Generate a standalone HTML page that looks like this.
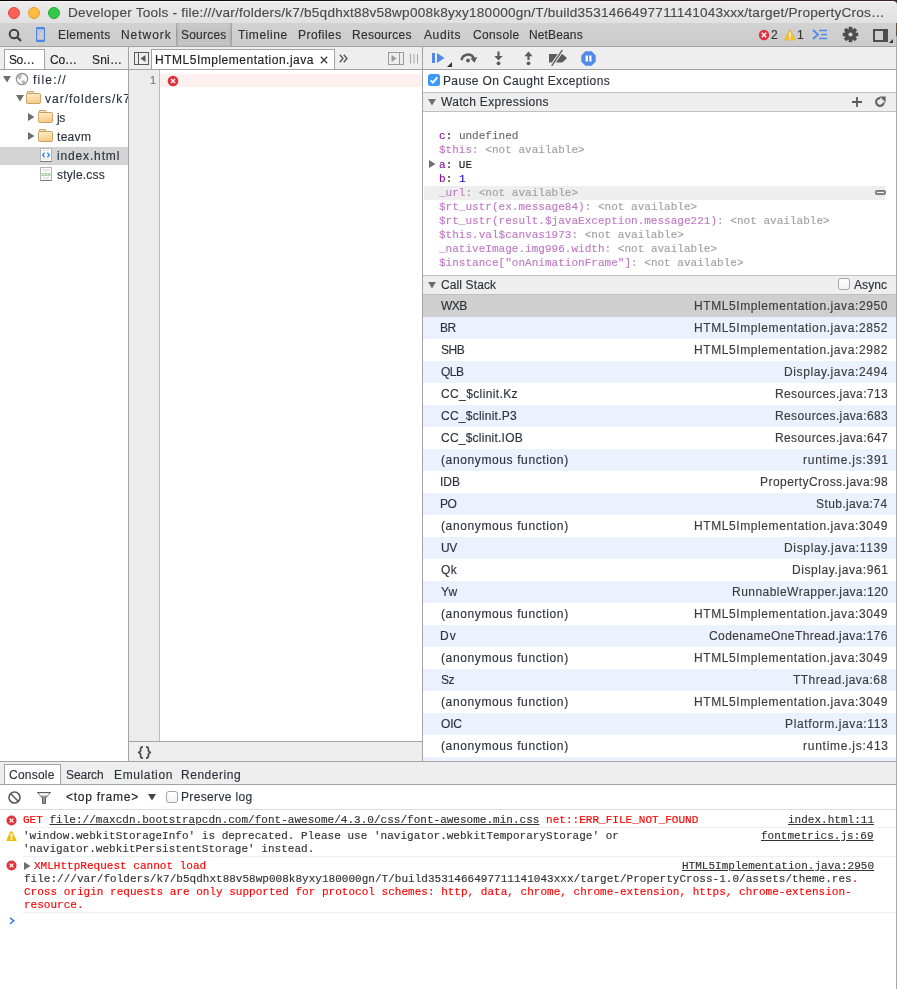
<!DOCTYPE html>
<html><head><meta charset="utf-8">
<style>
*{margin:0;padding:0;box-sizing:border-box}
html,body{width:897px;height:989px;overflow:hidden;background:#fff}
body{position:relative;font-family:"Liberation Sans",sans-serif;font-size:12px;color:#2c333d;}
.a{position:absolute}
.t{position:absolute;white-space:pre;line-height:14px;letter-spacing:0.45px;will-change:transform;-webkit-text-stroke:0.15px currentColor}
.m{font-family:"Liberation Mono",monospace;font-size:11px;letter-spacing:0.02px;line-height:13px}
.u{text-decoration:underline}
svg{position:absolute;overflow:visible}
</style></head><body>
<div class="a" style="left:0px;top:0px;width:897px;height:23px;background:linear-gradient(to right,#080404,#3a2430);"></div>
<div class="a" style="left:0px;top:1px;width:897px;height:22px;background:linear-gradient(#ececec,#e0e0e0);border-radius:0 4px 0 0"></div>
<div class="a" style="left:0px;top:1px;width:894px;height:1px;background:#f8f8f8;"></div>
<div class="t s" id="title" style="left:67.6px;top:5.5px;color:#4a4a4a;letter-spacing:0.217px;font-size:13.6px;">Developer Tools - file:///var/folders/k7/b5qdhxt88v58wp008k8yxy180000gn/T/build3531466497711141043xxx/target/PropertyCros…</div>
<div class="a" style="left:8px;top:7px;width:12px;height:12px;border-radius:50%;background:#fc5f57;border:0.5px solid #de4a44"></div>
<div class="a" style="left:28px;top:7px;width:12px;height:12px;border-radius:50%;background:#fdbc40;border:0.5px solid #de9f34"></div>
<div class="a" style="left:48px;top:7px;width:12px;height:12px;border-radius:50%;background:#34c84a;border:0.5px solid #27aa35"></div>
<div class="a" style="left:0px;top:23px;width:896px;height:23px;background:linear-gradient(#d2d2d2,#cbcbcb);"></div>
<div class="a" style="left:0px;top:46px;width:896px;height:1px;background:#a4a4a4;"></div>
<div class="a" style="left:176px;top:23px;width:56px;height:23px;background:linear-gradient(#cacaca,#c2c2c2 40%,#c4c4c4);box-shadow:inset 3px 0 3px -2px rgba(0,0,0,0.22),inset -3px 0 3px -2px rgba(0,0,0,0.22)"></div>
<div class="a" style="left:176px;top:25px;width:1px;height:20px;background:linear-gradient(rgba(150,150,150,0),#989898 50%,rgba(150,150,150,0));"></div>
<div class="a" style="left:231px;top:25px;width:1px;height:20px;background:linear-gradient(rgba(150,150,150,0),#989898 50%,rgba(150,150,150,0));"></div>
<div class="t s" id="tb_Elements" style="left:58.2px;top:28px;color:#303030;letter-spacing:0.307px;">Elements</div>
<div class="t s" id="tb_Network" style="left:121.0px;top:28px;color:#303030;letter-spacing:0.95px;">Network</div>
<div class="t s" id="tb_Sources" style="left:181.4px;top:28px;color:#303030;letter-spacing:0.217px;">Sources</div>
<div class="t s" id="tb_Timeline" style="left:238.4px;top:28px;color:#303030;letter-spacing:0.621px;">Timeline</div>
<div class="t s" id="tb_Profiles" style="left:298.2px;top:28px;color:#303030;letter-spacing:0.45px;">Profiles</div>
<div class="t s" id="tb_Resources" style="left:352.4px;top:28px;color:#303030;letter-spacing:0.275px;">Resources</div>
<div class="t s" id="tb_Audits" style="left:423.8px;top:28px;color:#303030;letter-spacing:0.61px;">Audits</div>
<div class="t s" id="tb_Console" style="left:472.8px;top:28px;color:#303030;letter-spacing:0.35px;">Console</div>
<div class="t s" id="tb_NetBeans" style="left:529.0px;top:28px;color:#303030;letter-spacing:0.136px;">NetBeans</div>
<svg style="left:7.5px;top:28px" width="16" height="16"><circle cx="6" cy="6" r="4.3" fill="none" stroke="#404040" stroke-width="2"/><line x1="9.2" y1="9.2" x2="13" y2="13" stroke="#404040" stroke-width="2.2"/></svg>
<svg style="left:36px;top:27px" width="9" height="15"><path d="M0 1.5Q0 0 1.5 0H7.5Q9 0 9 1.5V13.5Q9 15 7.5 15H1.5Q0 15 0 13.5Z M1.2 2.2V12.8H7.8V2.2Z" fill="#4a86e8" fill-rule="evenodd"/><path d="M2.3 8.5L5.5 3.5M2.2 5.2L3.5 3.3" stroke="#8fb2ee" stroke-width="0.9"/></svg>
<svg style="left:758px;top:29px" width="12" height="12"><circle cx="6" cy="6" r="5.2" fill="#e0323c"/><path d="M3.8 3.8L8.2 8.2M8.2 3.8L3.8 8.2" stroke="#fff" stroke-width="1.4"/></svg>
<div class="t s" style="left:771px;top:28px;color:#333;letter-spacing:0px;">2</div>
<svg style="left:784px;top:29px" width="12" height="12"><path d="M6 0.5L11.5 11H0.5Z" fill="#f4c430" stroke="#e0a800" stroke-width="0.5"/><rect x="5.3" y="3.5" width="1.4" height="4.5" fill="#fff"/><rect x="5.3" y="9" width="1.4" height="1.4" fill="#fff"/></svg>
<div class="t s" style="left:797px;top:28px;color:#333;letter-spacing:0px;">1</div>
<svg style="left:812px;top:29px" width="16" height="12"><path d="M1 1L6 5.5L1 10" fill="none" stroke="#4a8af4" stroke-width="1.8"/><path d="M7 1.5H15M9 5.5H15M7 9.5H15" stroke="#4a8af4" stroke-width="1.6"/></svg>
<svg style="left:842px;top:26px" width="17" height="17"><g transform="translate(8.5,8.5)" fill="#4d4d4d"><rect x="-1.8" y="-7.7" width="3.6" height="4" transform="rotate(0)"/><rect x="-1.8" y="-7.7" width="3.6" height="4" transform="rotate(45)"/><rect x="-1.8" y="-7.7" width="3.6" height="4" transform="rotate(90)"/><rect x="-1.8" y="-7.7" width="3.6" height="4" transform="rotate(135)"/><rect x="-1.8" y="-7.7" width="3.6" height="4" transform="rotate(180)"/><rect x="-1.8" y="-7.7" width="3.6" height="4" transform="rotate(225)"/><rect x="-1.8" y="-7.7" width="3.6" height="4" transform="rotate(270)"/><rect x="-1.8" y="-7.7" width="3.6" height="4" transform="rotate(315)"/><circle r="5.5"/></g><circle cx="8.5" cy="8.5" r="2.1" fill="#d4d4d4"/></svg>
<svg style="left:873px;top:29px" width="20" height="15"><rect x="1" y="1" width="13" height="11" fill="none" stroke="#4d4d4d" stroke-width="2"/><rect x="10" y="1" width="4" height="11" fill="#4d4d4d"/><path d="M20 10V14H16Z" fill="#333"/></svg>
<div class="a" style="left:0px;top:47px;width:128px;height:22px;background:#eeeeee;"></div>
<div class="a" style="left:0px;top:69px;width:128px;height:1px;background:#a3a3a3;"></div>
<div class="a" style="left:4px;top:49px;width:41px;height:20px;background:#fff;border:1px solid #a3a3a3;border-bottom:none;"></div>
<div class="t s" id="nav_so" style="left:9.2px;top:53px;color:#222;letter-spacing:-0.5px;">So…</div>
<div class="t s" id="nav_co" style="left:50.2px;top:53px;color:#222;letter-spacing:-0.15px;">Co…</div>
<div class="t s" id="nav_sni" style="left:91.8px;top:53px;color:#222;letter-spacing:0.183px;">Sni…</div>
<div class="a" style="left:128px;top:47px;width:1px;height:714px;background:#a3a3a3;"></div>
<div class="a" style="left:0px;top:147px;width:128px;height:18px;background:#d4d4d4;"></div>
<svg style="left:3px;top:76px" width="8" height="7"><path d="M0 0H8L4 6.5Z" fill="#6e6e6e"/></svg>
<svg style="left:15px;top:72px" width="14" height="14"><circle cx="7" cy="7" r="5.7" fill="#fbfbfb" stroke="#8c8c8c" stroke-width="1.15"/><path d="M2.8 4.2Q4.6 2.2 8 2.6L6.6 4.4Q5.6 5.2 6.2 7Q4.6 7.8 3.4 6.9Q2.6 5.6 2.8 4.2Z" fill="#b9b9b9"/><path d="M6.6 8.5Q8.8 8.1 10.4 9.2Q9.9 11.4 8 12.4Q6.7 11.2 6.6 8.5Z" fill="#b2b2b2"/></svg>
<div class="t s" id="tr_file" style="left:32.8px;top:73px;letter-spacing:1.2px;">file://</div>
<svg style="left:15.5px;top:95px" width="8" height="7"><path d="M0 0H8L4 6.5Z" fill="#6e6e6e"/></svg>
<svg style="left:26px;top:91px" width="15" height="13"><defs><linearGradient id="fg" x1="0" y1="0" x2="0.3" y2="1"><stop offset="0" stop-color="#fff0d2"/><stop offset="1" stop-color="#f8cb86"/></linearGradient></defs><path d="M1.5 0.5H7Q7.8 0.5 7.8 1.3V2.5H1Z" fill="#fde2b0" stroke="#c49a5a" stroke-width="0.9"/><rect x="0.5" y="2.5" width="14" height="10" rx="1.2" fill="url(#fg)" stroke="#c49a5a" stroke-width="0.9"/></svg>
<div class="a" style="left:0;top:88px;width:128px;height:18px;overflow:hidden">
<div class="t s" id="tr_var" style="left:44.5px;top:4px;letter-spacing:1.0px;">var/folders/k7</div>
</div>
<svg style="left:28px;top:113px" width="7" height="8"><path d="M0 0V8L6.5 4Z" fill="#6e6e6e"/></svg>
<svg style="left:38px;top:110px" width="15" height="13"><defs><linearGradient id="fg" x1="0" y1="0" x2="0.3" y2="1"><stop offset="0" stop-color="#fff0d2"/><stop offset="1" stop-color="#f8cb86"/></linearGradient></defs><path d="M1.5 0.5H7Q7.8 0.5 7.8 1.3V2.5H1Z" fill="#fde2b0" stroke="#c49a5a" stroke-width="0.9"/><rect x="0.5" y="2.5" width="14" height="10" rx="1.2" fill="url(#fg)" stroke="#c49a5a" stroke-width="0.9"/></svg>
<div class="t s" id="tr_js" style="left:57.2px;top:111px;letter-spacing:-0.5px;">js</div>
<svg style="left:28px;top:132px" width="7" height="8"><path d="M0 0V8L6.5 4Z" fill="#6e6e6e"/></svg>
<svg style="left:38px;top:129px" width="15" height="13"><defs><linearGradient id="fg" x1="0" y1="0" x2="0.3" y2="1"><stop offset="0" stop-color="#fff0d2"/><stop offset="1" stop-color="#f8cb86"/></linearGradient></defs><path d="M1.5 0.5H7Q7.8 0.5 7.8 1.3V2.5H1Z" fill="#fde2b0" stroke="#c49a5a" stroke-width="0.9"/><rect x="0.5" y="2.5" width="14" height="10" rx="1.2" fill="url(#fg)" stroke="#c49a5a" stroke-width="0.9"/></svg>
<div class="t s" id="tr_teavm" style="left:57.2px;top:130px;letter-spacing:0.3px;">teavm</div>
<svg style="left:40px;top:148px" width="12" height="14"><rect x="0.5" y="0.5" width="11" height="13" fill="#fdfdfd" stroke="#b4b4b4"/><path d="M0.5 13.5H11.5" stroke="#7a7a7a"/><path d="M2.5 2.5H9.5M2.5 11H9.5" stroke="#d0d0d0" stroke-width="0.8"/><path d="M4.6 4.6L2.7 7L4.6 9.4M7.4 4.6L9.3 7L7.4 9.4" stroke="#3f86ee" stroke-width="1.5" fill="none"/></svg>
<div class="t s" id="tr_index" style="left:57.2px;top:149px;letter-spacing:0.85px;">index.html</div>
<svg style="left:40px;top:167px" width="12" height="14"><rect x="0.5" y="0.5" width="11" height="13" fill="#fdfdfd" stroke="#b4b4b4"/><path d="M0.5 13.5H11.5" stroke="#7a7a7a"/><path d="M2.5 2.5H9.5M2.5 3.8H9.5M2.5 10.5H9.5M2.5 11.7H9.5" stroke="#d8d8d8" stroke-width="0.7"/><text x="6" y="8.8" font-size="5.8" font-family="Liberation Sans" font-weight="bold" text-anchor="middle" fill="#79b863" letter-spacing="-0.2">css</text></svg>
<div class="t s" id="tr_style" style="left:57.2px;top:168px;letter-spacing:0.225px;">style.css</div>
<div class="a" style="left:129px;top:47px;width:293px;height:22px;background:#eeeeee;"></div>
<div class="a" style="left:129px;top:69px;width:293px;height:1px;background:#a3a3a3;"></div>
<svg style="left:134px;top:52px" width="15" height="13"><rect x="0.5" y="0.5" width="14" height="12" fill="none" stroke="#5a5a5a"/><path d="M4.5 1V12" stroke="#5a5a5a"/><path d="M11.5 3V10L6.5 6.5Z" fill="#5a5a5a"/></svg>
<div class="a" style="left:151px;top:49px;width:184px;height:20px;background:#fff;border:1px solid #a3a3a3;border-bottom:none;"></div>
<div class="t s" id="ed_tab" style="left:155.0px;top:53px;color:#222;letter-spacing:0.511px;">HTML5Implementation.java</div>
<svg style="left:320px;top:56px" width="8" height="8"><path d="M0.8 0.8L7.2 7.2M7.2 0.8L0.8 7.2" stroke="#444" stroke-width="1.4"/></svg>
<svg style="left:339px;top:54px" width="9" height="9"><path d="M0.8 0.8L4 4.5L0.8 8.2M4.8 0.8L8 4.5L4.8 8.2" stroke="#555" stroke-width="1.3" fill="none"/></svg>
<svg style="left:388px;top:52px" width="16" height="13"><rect x="0.5" y="0.5" width="15" height="12" fill="none" stroke="#9a9a9a"/><path d="M11.5 1V12" stroke="#9a9a9a"/><path d="M3.5 3V10L8.5 6.5Z" fill="#9a9a9a"/></svg>
<svg style="left:409px;top:54px" width="10" height="10"><path d="M1.5 0V9.5M5 0V9.5M8.5 0V9.5" stroke="#9c9c9c" stroke-width="0.9"/></svg>
<div class="a" style="left:129px;top:70px;width:30px;height:671px;background:#ececec;"></div>
<div class="a" style="left:159px;top:70px;width:1px;height:671px;background:#bbbbbb;"></div>
<div class="a" style="left:160px;top:74px;width:262px;height:13px;background:#fff0f0;"></div>
<div class="t s" style="left:149.5px;top:73px;color:#787878;letter-spacing:0px;font-size:11px;">1</div>
<svg style="left:167px;top:75px" width="12" height="12"><circle cx="6" cy="6" r="5.3" fill="#e0323c"/><path d="M4 4L8 8M8 4L4 8" stroke="#fff" stroke-width="1.3"/></svg>
<div class="a" style="left:129px;top:741px;width:293px;height:1px;background:#a3a3a3;"></div>
<div class="a" style="left:129px;top:742px;width:293px;height:19px;background:#eeeeee;"></div>
<svg style="left:137px;top:746px" width="16" height="13"><path d="M6 0.9Q3.6 0.9 3.6 3V4.6Q3.6 6.2 1 6.5Q3.6 6.8 3.6 8.4V10Q3.6 12.1 6 12.1M9 0.9Q11.4 0.9 11.4 3V4.6Q11.4 6.2 14 6.5Q11.4 6.8 11.4 8.4V10Q11.4 12.1 9 12.1" fill="none" stroke="#4a4a4a" stroke-width="1.7"/></svg>
<div class="a" style="left:422px;top:47px;width:1px;height:714px;background:#a3a3a3;"></div>
<div class="a" style="left:423px;top:47px;width:473px;height:22px;background:#eeeeee;"></div>
<div class="a" style="left:423px;top:69px;width:473px;height:1px;background:#a3a3a3;"></div>
<svg style="left:431px;top:52px" width="22" height="16"><rect x="1" y="1" width="3" height="10" fill="#4f8ae8"/><path d="M6 1V11L13.5 6Z" fill="#4f8ae8"/><path d="M21 10V15H16Z" fill="#333"/></svg>
<svg style="left:459px;top:51px" width="20" height="14"><path d="M2.5 9.2A6.6 6.6 0 0 1 14.8 7" fill="none" stroke="#5c5c5c" stroke-width="2.4"/><path d="M11.3 7.6L18.2 6L15.6 11.8Z" fill="#5c5c5c"/><circle cx="9" cy="9.5" r="1.9" fill="#5c5c5c"/></svg>
<svg style="left:494px;top:51px" width="9" height="15"><path d="M4.5 0.5V6" stroke="#5c5c5c" stroke-width="2.2"/><path d="M0.3 5H8.7L4.5 9.5Z" fill="#5c5c5c"/><circle cx="4.5" cy="12.3" r="1.9" fill="#5c5c5c"/></svg>
<svg style="left:524px;top:51px" width="9" height="15"><path d="M4.5 4V9" stroke="#5c5c5c" stroke-width="2.2"/><path d="M0.3 5.3H8.7L4.5 0.6Z" fill="#5c5c5c"/><circle cx="4.5" cy="12.3" r="1.9" fill="#5c5c5c"/></svg>
<svg style="left:548px;top:49px" width="20" height="18"><path d="M1 5H13.5Q14.5 5 15.5 6L18.6 8.8Q19 9.2 18.6 9.6L15.5 12.4Q14.5 13.4 13.5 13.4H1Z" fill="#5c5c5c"/><path d="M14.5 1L3.5 17" stroke="#eeeeee" stroke-width="3.4"/><path d="M14.3 1.2L3.7 16.8" stroke="#5c5c5c" stroke-width="1.4"/></svg>
<svg style="left:580.5px;top:50.5px" width="15" height="15"><path d="M4.4 0.3H10.6L14.7 4.4V10.6L10.6 14.7H4.4L0.3 10.6V4.4Z" fill="#4f8ae8"/><rect x="4.6" y="4.5" width="2.3" height="6" fill="#fffdf5"/><rect x="8.2" y="4.5" width="2.3" height="6" fill="#fffdf5"/></svg>
<svg style="left:428px;top:74px" width="12" height="12"><rect x="0" y="0" width="12" height="12" rx="2.5" fill="#3b99fc"/><path d="M2.7 6.3L4.9 8.6L9.3 3.4" fill="none" stroke="#fff" stroke-width="1.9"/></svg>
<div class="t s" id="pause" style="left:442.8px;top:74px;letter-spacing:0.37px;">Pause On Caught Exceptions</div>
<div class="a" style="left:423px;top:92px;width:473px;height:1px;background:#c0c0c0;"></div>
<div class="a" style="left:423px;top:93px;width:473px;height:18px;background:#eeeeee;"></div>
<div class="a" style="left:423px;top:111px;width:473px;height:1px;background:#c0c0c0;"></div>
<svg style="left:428px;top:99px" width="8" height="7"><path d="M0 0H8L4 6.5Z" fill="#6e6e6e"/></svg>
<div class="t s" id="watch" style="left:441.0px;top:95px;letter-spacing:0.325px;">Watch Expressions</div>
<svg style="left:852px;top:97px" width="10" height="10"><path d="M5 0V10M0 5H10" stroke="#5a5a5a" stroke-width="1.8"/></svg>
<svg style="left:874px;top:96px" width="12" height="12"><path d="M9.9 6.2A3.9 3.9 0 1 1 6.4 2.1" fill="none" stroke="#646464" stroke-width="2.1"/><path d="M5.6 0.4H11.6V6.4Z" fill="#646464"/></svg>
<div class="a" style="left:424px;top:186px;width:461px;height:14px;background:#eeeeee;"></div>
<div class="a" style="left:875px;top:190px;width:11px;height:5px;border-radius:1.5px;background:#8a8a8a;border:1px solid #777"></div>
<div class="a" style="left:877px;top:192px;width:7px;height:1px;background:#eee"></div>
<svg style="left:429px;top:160px" width="7" height="8"><path d="M0 0V8L6.5 4Z" fill="#6e6e6e"/></svg>
<div class="t m" style="left:439px;top:130px;"><span style="color:#881391">c</span><span style="color:#222">: </span><span style="color:#6a6a6a">undefined</span></div>
<div class="t m" style="left:439px;top:144px;"><span style="color:#c07ac4">$this</span><span style="color:#a0a0a0">: &lt;not available&gt;</span></div>
<div class="t m" style="left:439px;top:159px;"><span style="color:#881391">a</span><span style="color:#222">: UE</span></div>
<div class="t m" style="left:439px;top:173px;"><span style="color:#881391">b</span><span style="color:#222">: </span><span style="color:#1c00cf">1</span></div>
<div class="t m" style="left:439px;top:187px;"><span style="color:#c07ac4">_url</span><span style="color:#a0a0a0">: &lt;not available&gt;</span></div>
<div class="t m" style="left:439px;top:201px;"><span style="color:#c07ac4">$rt_ustr(ex.message84)</span><span style="color:#a0a0a0">: &lt;not available&gt;</span></div>
<div class="t m" style="left:439px;top:215px;"><span style="color:#c07ac4">$rt_ustr(result.$javaException.message221)</span><span style="color:#a0a0a0">: &lt;not available&gt;</span></div>
<div class="t m" style="left:439px;top:229px;"><span style="color:#c07ac4">$this.val$canvas1973</span><span style="color:#a0a0a0">: &lt;not available&gt;</span></div>
<div class="t m" style="left:439px;top:243px;"><span style="color:#c07ac4">_nativeImage.img996.width</span><span style="color:#a0a0a0">: &lt;not available&gt;</span></div>
<div class="t m" style="left:439px;top:257px;"><span style="color:#c07ac4">$instance["onAnimationFrame"]</span><span style="color:#a0a0a0">: &lt;not available&gt;</span></div>
<div class="a" style="left:423px;top:275px;width:473px;height:1px;background:#c0c0c0;"></div>
<div class="a" style="left:423px;top:276px;width:473px;height:18px;background:#eeeeee;"></div>
<div class="a" style="left:423px;top:294px;width:473px;height:1px;background:#c0c0c0;"></div>
<svg style="left:428px;top:282px" width="8" height="7"><path d="M0 0H8L4 6.5Z" fill="#6e6e6e"/></svg>
<div class="t s" id="cs_hdr" style="left:441.2px;top:278px;letter-spacing:0.117px;">Call Stack</div>
<div class="a" style="left:838px;top:278px;width:12px;height:12px;border:1px solid #a5a5a5;border-radius:3px;background:linear-gradient(#fff,#f4f4f4)"></div>
<div class="t s" id="async" style="left:853.6px;top:278px;letter-spacing:0.1px;">Async</div>
<div class="a" style="left:423px;top:295px;width:473px;height:22px;background:#cfcfcf;"></div>
<div class="t s" id="csf0" style="left:441.2px;top:299px;letter-spacing:-0.5px;">WXB</div>
<div class="t s" id="csl0" style="right:8.86px;top:299px;text-align:right;color:#3c3c3c;letter-spacing:0.593px;">HTML5Implementation.java:2950</div>
<div class="a" style="left:423px;top:317px;width:473px;height:22px;background:#ebf2fe;"></div>
<div class="t s" id="csf1" style="left:440.2px;top:321px;letter-spacing:-0.5px;">BR</div>
<div class="t s" id="csl1" style="right:8.86px;top:321px;text-align:right;color:#3c3c3c;letter-spacing:0.593px;">HTML5Implementation.java:2852</div>
<div class="t s" id="csf2" style="left:441.2px;top:343px;letter-spacing:-0.5px;">SHB</div>
<div class="t s" id="csl2" style="right:8.86px;top:343px;text-align:right;color:#3c3c3c;letter-spacing:0.593px;">HTML5Implementation.java:2982</div>
<div class="a" style="left:423px;top:361px;width:473px;height:22px;background:#ebf2fe;"></div>
<div class="t s" id="csf3" style="left:441.2px;top:365px;letter-spacing:-0.5px;">QLB</div>
<div class="t s" id="csl3" style="right:8.85px;top:365px;text-align:right;color:#3c3c3c;letter-spacing:0.6px;">Display.java:2494</div>
<div class="t s" id="csf4" style="left:441.2px;top:387px;letter-spacing:0.383px;">CC_$clinit.Kz</div>
<div class="t s" id="csl4" style="right:9.06px;top:387px;text-align:right;color:#3c3c3c;letter-spacing:0.391px;">Resources.java:713</div>
<div class="a" style="left:423px;top:405px;width:473px;height:22px;background:#ebf2fe;"></div>
<div class="t s" id="csf5" style="left:441.2px;top:409px;letter-spacing:0.25px;">CC_$clinit.P3</div>
<div class="t s" id="csl5" style="right:9.06px;top:409px;text-align:right;color:#3c3c3c;letter-spacing:0.391px;">Resources.java:683</div>
<div class="t s" id="csf6" style="left:441.2px;top:431px;letter-spacing:0.235px;">CC_$clinit.IOB</div>
<div class="t s" id="csl6" style="right:9.06px;top:431px;text-align:right;color:#3c3c3c;letter-spacing:0.391px;">Resources.java:647</div>
<div class="a" style="left:423px;top:449px;width:473px;height:22px;background:#ebf2fe;"></div>
<div class="t s" id="csf7" style="left:441.2px;top:453px;letter-spacing:0.618px;">(anonymous function)</div>
<div class="t s" id="csl7" style="right:8.71px;top:453px;text-align:right;color:#3c3c3c;letter-spacing:0.742px;">runtime.js:391</div>
<div class="t s" id="csf8" style="left:440.2px;top:475px;letter-spacing:0.0px;">IDB</div>
<div class="t s" id="csl8" style="right:9.0px;top:475px;text-align:right;color:#3c3c3c;letter-spacing:0.45px;">PropertyCross.java:98</div>
<div class="a" style="left:423px;top:493px;width:473px;height:22px;background:#ebf2fe;"></div>
<div class="t s" id="csf9" style="left:440.2px;top:497px;letter-spacing:-0.5px;">PO</div>
<div class="t s" id="csl9" style="right:9.05px;top:497px;text-align:right;color:#3c3c3c;letter-spacing:0.395px;">Stub.java:74</div>
<div class="t s" id="csf10" style="left:441.2px;top:519px;letter-spacing:0.618px;">(anonymous function)</div>
<div class="t s" id="csl10" style="right:8.86px;top:519px;text-align:right;color:#3c3c3c;letter-spacing:0.593px;">HTML5Implementation.java:3049</div>
<div class="a" style="left:423px;top:537px;width:473px;height:22px;background:#ebf2fe;"></div>
<div class="t s" id="csf11" style="left:441.2px;top:541px;letter-spacing:-0.5px;">UV</div>
<div class="t s" id="csl11" style="right:8.79px;top:541px;text-align:right;color:#3c3c3c;letter-spacing:0.662px;">Display.java:1139</div>
<div class="t s" id="csf12" style="left:441.2px;top:563px;letter-spacing:0.3px;">Qk</div>
<div class="t s" id="csl12" style="right:8.87px;top:563px;text-align:right;color:#3c3c3c;letter-spacing:0.583px;">Display.java:961</div>
<div class="a" style="left:423px;top:581px;width:473px;height:22px;background:#ebf2fe;"></div>
<div class="t s" id="csf13" style="left:441.2px;top:585px;letter-spacing:-0.5px;">Yw</div>
<div class="t s" id="csl13" style="right:8.98px;top:585px;text-align:right;color:#3c3c3c;letter-spacing:0.467px;">RunnableWrapper.java:120</div>
<div class="t s" id="csf14" style="left:441.2px;top:607px;letter-spacing:0.618px;">(anonymous function)</div>
<div class="t s" id="csl14" style="right:8.86px;top:607px;text-align:right;color:#3c3c3c;letter-spacing:0.593px;">HTML5Implementation.java:3049</div>
<div class="a" style="left:423px;top:625px;width:473px;height:22px;background:#ebf2fe;"></div>
<div class="t s" id="csf15" style="left:440.2px;top:629px;letter-spacing:1.2px;">Dv</div>
<div class="t s" id="csl15" style="right:9.04px;top:629px;text-align:right;color:#3c3c3c;letter-spacing:0.41px;">CodenameOneThread.java:176</div>
<div class="t s" id="csf16" style="left:441.2px;top:651px;letter-spacing:0.618px;">(anonymous function)</div>
<div class="t s" id="csl16" style="right:8.86px;top:651px;text-align:right;color:#3c3c3c;letter-spacing:0.593px;">HTML5Implementation.java:3049</div>
<div class="a" style="left:423px;top:669px;width:473px;height:22px;background:#ebf2fe;"></div>
<div class="t s" id="csf17" style="left:441.2px;top:673px;letter-spacing:-0.5px;">Sz</div>
<div class="t s" id="csl17" style="right:8.97px;top:673px;text-align:right;color:#3c3c3c;letter-spacing:0.479px;">TThread.java:68</div>
<div class="t s" id="csf18" style="left:441.2px;top:695px;letter-spacing:0.618px;">(anonymous function)</div>
<div class="t s" id="csl18" style="right:8.86px;top:695px;text-align:right;color:#3c3c3c;letter-spacing:0.593px;">HTML5Implementation.java:3049</div>
<div class="a" style="left:423px;top:713px;width:473px;height:22px;background:#ebf2fe;"></div>
<div class="t s" id="csf19" style="left:441.2px;top:717px;letter-spacing:-0.15px;">OIC</div>
<div class="t s" id="csl19" style="right:8.81px;top:717px;text-align:right;color:#3c3c3c;letter-spacing:0.637px;">Platform.java:113</div>
<div class="t s" id="csf20" style="left:441.2px;top:739px;letter-spacing:0.618px;">(anonymous function)</div>
<div class="t s" id="csl20" style="right:8.71px;top:739px;text-align:right;color:#3c3c3c;letter-spacing:0.742px;">runtime.js:413</div>
<div class="a" style="left:423px;top:757px;width:473px;height:4px;background:#ebf2fe;"></div>
<div class="a" style="left:896px;top:23px;width:1px;height:966px;background:#a8a8a8;"></div>
<div class="a" style="left:896px;top:23px;width:1px;height:13px;background:#7a4a30;"></div>
<div class="a" style="left:0px;top:761px;width:896px;height:1px;background:#a3a3a3;"></div>
<div class="a" style="left:0px;top:762px;width:896px;height:22px;background:#eeeeee;"></div>
<div class="a" style="left:0px;top:784px;width:896px;height:1px;background:#a3a3a3;"></div>
<div class="a" style="left:4px;top:764px;width:57px;height:20px;background:#fff;border:1px solid #a3a3a3;border-bottom:none;"></div>
<div class="t s" id="dr_console" style="left:9.2px;top:768px;letter-spacing:0.217px;">Console</div>
<div class="t s" id="dr_search" style="left:66.2px;top:768px;letter-spacing:-0.07px;">Search</div>
<div class="t s" id="dr_emu" style="left:113.8px;top:768px;letter-spacing:0.625px;">Emulation</div>
<div class="t s" id="dr_rend" style="left:181.2px;top:768px;letter-spacing:0.525px;">Rendering</div>
<svg style="left:8px;top:791px" width="13" height="13"><circle cx="6.5" cy="6.5" r="5.5" fill="none" stroke="#5a5a5a" stroke-width="1.6"/><path d="M2.8 2.8L10.2 10.2" stroke="#5a5a5a" stroke-width="1.6"/></svg>
<svg style="left:37px;top:792px" width="14" height="12"><path d="M0.5 0.5H13.5L8.5 6V11.5H5.5V6Z" fill="#9a9a9a" stroke="#5a5a5a" stroke-width="1"/><path d="M1.5 1.3H12.5L10.5 3.5H3.5Z" fill="#fff"/></svg>
<div class="t s" id="dr_top" style="left:66.2px;top:790px;color:#222;letter-spacing:0.75px;">&lt;top frame&gt;</div>
<svg style="left:148px;top:794px" width="8" height="7"><path d="M0 0H8L4 6.5Z" fill="#444"/></svg>
<div class="a" style="left:166px;top:791px;width:12px;height:12px;border:1px solid #a5a5a5;border-radius:3px;background:linear-gradient(#fff,#f4f4f4)"></div>
<div class="t s" id="dr_pres" style="left:180.6px;top:790px;letter-spacing:0.341px;">Preserve log</div>
<div class="a" style="left:0px;top:809px;width:896px;height:1px;background:#dcdcdc;"></div>
<svg style="left:5.5px;top:815px" width="11" height="11"><circle cx="5.5" cy="5.5" r="5" fill="#e0323c"/><path d="M3.6 3.6L7.4 7.4M7.4 3.6L3.6 7.4" stroke="#fff" stroke-width="1.3"/></svg>
<div class="t m" style="left:23px;top:814px;"><span style="color:#ff0000">GET </span><span class="u" style="color:#333">file://maxcdn.bootstrapcdn.com/font-awesome/4.3.0/css/font-awesome.min.css</span><span style="color:#ff0000"> net::ERR_FILE_NOT_FOUND</span></div>
<div class="t m" style="right:23px;top:814px;text-align:right;color:#333;text-decoration:underline">index.html:11</div>
<div class="a" style="left:23px;top:827px;width:873px;height:1px;background:#f0f0f0;"></div>
<svg style="left:5.5px;top:831px" width="11" height="10"><path d="M4.2 0.6Q5.2 -0.3 6.2 0.6L10.6 9.2Q10.8 10 10 10H1Q0.2 10 0.4 9.2Z" fill="#efbd0b"/><rect x="4.6" y="2.6" width="1.8" height="4.4" rx="0.6" fill="#fff"/><rect x="4.6" y="7.8" width="1.8" height="1.2" fill="#fff"/></svg>
<div class="t m" style="left:23.3px;top:830px;color:#333;">'window.webkitStorageInfo' is deprecated. Please use 'navigator.webkitTemporaryStorage' or
'navigator.webkitPersistentStorage' instead.</div>
<div class="t m" style="right:23px;top:830px;text-align:right;color:#333;text-decoration:underline">fontmetrics.js:69</div>
<div class="a" style="left:23px;top:856px;width:873px;height:1px;background:#f0f0f0;"></div>
<svg style="left:5.5px;top:860px" width="11" height="11"><circle cx="5.5" cy="5.5" r="5" fill="#e0323c"/><path d="M3.6 3.6L7.4 7.4M7.4 3.6L3.6 7.4" stroke="#fff" stroke-width="1.3"/></svg>
<svg style="left:24px;top:862px" width="7" height="8"><path d="M0 0V8L6.5 4Z" fill="#6e6e6e"/></svg>
<div class="t m" style="left:34px;top:860px;"><span style="color:#ff0000">XMLHttpRequest cannot load</span></div>
<div class="t m" style="right:23px;top:860px;text-align:right;color:#333;text-decoration:underline">HTML5Implementation.java:2950</div>
<div class="t m" style="left:23.8px;top:872.5px;line-height:13.1px"><span style="color:#333">file:///var/folders/k7/b5qdhxt88v58wp008k8yxy180000gn/T/build3531466497711141043xxx/target/PropertyCross-1.0/assets/theme.res</span><span style="color:#ff0000">.</span>
<span style="color:#ff0000">Cross origin requests are only supported for protocol schemes: http, data, chrome, chrome-extension, https, chrome-extension-
resource.</span></div>
<div class="a" style="left:23px;top:912px;width:873px;height:1px;background:#f0f0f0;"></div>
<svg style="left:9px;top:917px" width="7" height="8"><path d="M1 0.8L4.8 3.8L1 6.8" fill="none" stroke="#3f7ee8" stroke-width="1.5"/></svg>
</body></html>
